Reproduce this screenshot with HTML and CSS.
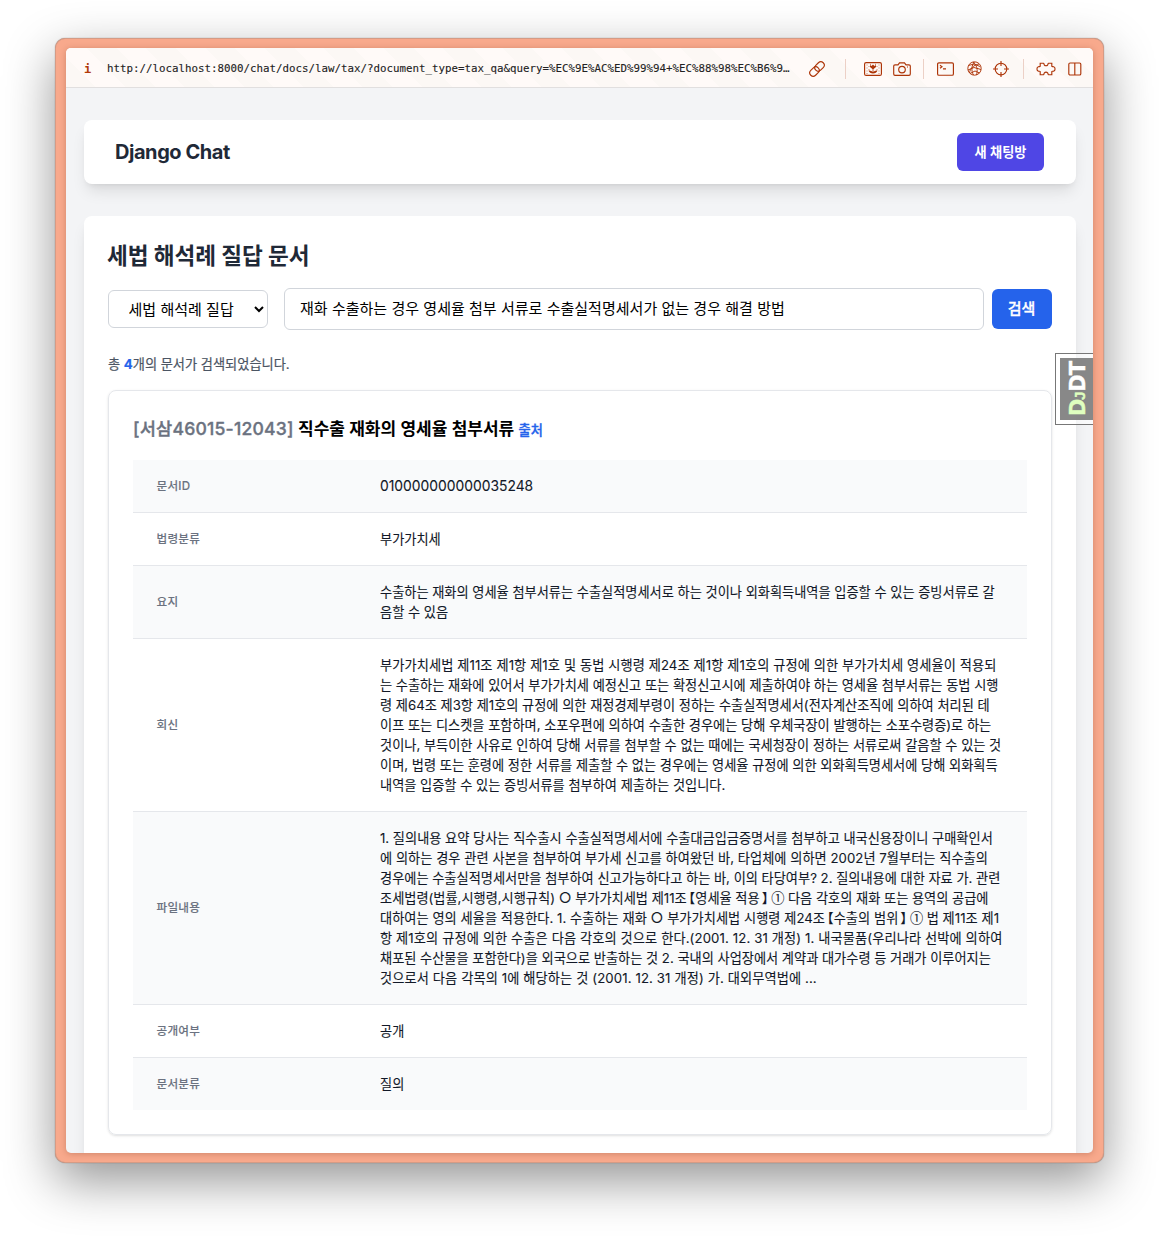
FILE: index.html
```html
<!DOCTYPE html>
<html lang="ko">
<head>
<meta charset="utf-8">
<title>세법 해석례 질답 문서</title>
<link rel="stylesheet" href="styles.css">
</head>
<body>
<div class="frame">
<div class="window">
  <header class="toolbar">
    <b class="info">i</b>
    <span class="url">http://localhost:8000/chat/docs/law/tax/?document_type=tax_qa&amp;query=%EC%9E%AC%ED%99%94+%EC%88%98%EC%B6%9…</span>
    <div class="tools">
      <svg class="link" width="16" height="16" viewBox="0 0 16 16"><g transform="rotate(-45 8 8)"><rect x="-.8" y="4.600" width="10.500" height="6.800" rx="3.400"/><rect x="6.300" y="4.600" width="10.500" height="6.800" rx="3.400"/></g></svg>
      <i class="sep s1"></i>
      <svg class="photo" width="18" height="14" viewBox="0 0 18 14"><rect x=".6" y=".6" width="16.8" height="12.8" rx="1.5"/><path class="dots" d="M2.500 3h1M2.500 6h1M2.500 9h1M2.500 11.500h1M14.500 3h1M14.500 6h1M14.500 9h1M14.500 11.500h1M4.500 4.500h1M4.500 7.500h1M12.500 4.500h1M12.500 7.500h1M6 2.300h1M11 2.300h1"/><path class="solid" d="M9 7.500 6 5V3l1.500 1L9 2.500 10.500 4 12 3v2zM8.600 7h.8v2.500h-.8zM4.500 8.500c2 0 3 .5 4.500 1.500 1.500-1 2.500-1.500 4.500-1.500-.5 2-2.500 3-4.500 3s-4-1-4.500-3z"/></svg>
      <svg class="camera" width="18" height="14" viewBox="0 0 18 14"><path d="M2 2.800h3L6.500.8h5L13 2.800h3a1.300 1.300 0 0 1 1.300 1.300v8A1.300 1.300 0 0 1 16 13.400H2a1.300 1.300 0 0 1-1.300-1.300v-8A1.300 1.300 0 0 1 2 2.800z"/><circle cx="9" cy="7.600" r="3.300"/><path d="M14 5h1"/></svg>
      <i class="sep s2"></i>
      <svg class="term" width="17" height="14" viewBox="0 0 17 14"><rect x=".6" y=".8" width="15.800" height="12.400" rx="1.300"/><path d="m3 3.300 2 1.500-2 1.500M6 6.800h3"/></svg>
      <svg class="globe" width="15" height="15" viewBox="0 0 15 15"><circle cx="7.500" cy="7.500" r="6.700"/><path d="M1.500 4.500 7 3l6 2.500M1 9l6-2.500 7 2M3 12.500 8 10l4.500 2M7.500 1C4.500 4 4 10 6.500 14M6 1c4 3 5 8 3.500 13M12 3C7 4 3 7 2.500 12"/></svg>
      <svg class="target" width="16" height="16" viewBox="0 0 16 16"><circle cx="8" cy="8" r="5.800"/><path d="M8 0v5M8 11v5M0 8h5M11 8h5"/></svg>
      <i class="sep s3"></i>
      <svg class="puzzle" width="20" height="14" viewBox="0 0 20 14"><path d="M4.200 1.200h3.300c.6 0 .3 1.200.9 1.900.8.900 2.400.9 3.200 0 .6-.7.3-1.900.9-1.900h3.300v3.100c0 .6 1 .2 1.900.5 1.800.7 1.800 3.600 0 4.300-.9.300-1.900-.1-1.900.5v3.100h-3.300c-.6 0-.3-1.200-.9-1.900-.8-.9-2.400-.9-3.200 0-.6.7-.3 1.900-.9 1.900H4.200V9.600c0-.6-1-.2-1.900-.5C.5 8.400.5 5.500 2.300 4.800c.9-.3 1.900.1 1.900-.5z"/></svg>
      <svg class="split" width="14" height="14" viewBox="0 0 14 14"><rect x=".8" y="1" width="12" height="12" rx="1.300"/><path d="M6.800 1v12"/></svg>
    </div>
  </header>
  <main class="page">
    <nav class="navbar"><span class="brand">Django Chat</span><a class="new-room">새 채팅방</a></nav>
    <section class="panel">
      <h1>세법 해석례 질답 문서</h1>
      <form class="search">
        <select><option>세법 해석례 질답</option></select>
        <input type="text" value="재화 수출하는 경우 영세율 첨부 서류로 수출실적명세서가 없는 경우 해결 방법">
        <button type="button">검색</button>
      </form>
      <p class="count">총 <b>4</b>개의 문서가 검색되었습니다.</p>
      <article class="doc">
        <h2><span class="code">[서삼46015-12043]</span> <span class="title">직수출 재화의 영세율 첨부서류</span> <a>출처</a></h2>
        <dl>
          <div class="row"><dt>문서ID</dt><dd class="number">010000000000035248</dd></div>
          <div class="row"><dt>법령분류</dt><dd>부가가치세</dd></div>
          <div class="row"><dt>요지</dt><dd>수출하는 재화의 영세율 첨부서류는 수출실적명세서로 하는 것이나 외화획득내역을 입증할 수 있는 증빙서류로 갈<br>음할 수 있음</dd></div>
          <div class="row"><dt>회신</dt><dd><span class="loose">부가가치세법 제11조 제1항 제1호 및 동법 시행령 제24조 제1항 제1호의 규정에 의한 부가가치세 영세율이 적용되</span><br>는 수출하는 재화에 있어서 부가가치세 예정신고 또는 확정신고시에 제출하여야 하는 영세율 첨부서류는 동법 시행<br>령 제64조 제3항 제1호의 규정에 의한 재정경제부령이 정하는 수출실적명세서(전자계산조직에 의하여 처리된 테<br>이프 또는 디스켓을 포함하며, 소포우편에 의하여 수출한 경우에는 당해 우체국장이 발행하는 소포수령증)로 하는<br>것이나, 부득이한 사유로 인하여 당해 서류를 첨부할 수 없는 때에는 국세청장이 정하는 서류로써 갈음할 수 있는 것<br>이며, 법령 또는 훈령에 정한 서류를 제출할 수 없는 경우에는 영세율 규정에 의한 외화획득명세서에 당해 외화획득<br>내역을 입증할 수 있는 증빙서류를 첨부하여 제출하는 것입니다.</dd></div>
          <div class="row"><dt>파일내용</dt><dd>1. 질의내용 요약 당사는 직수출시 수출실적명세서에 수출대금입금증명서를 첨부하고 내국신용장이니 구매확인서<br><span class="relaxed">에 의하는 경우 관련 사본을 첨부하여 부가세 신고를 하여왔던 바, 타업체에 의하면 2002년 7월부터는 직수출의</span><br>경우에는 수출실적명세서만을 첨부하여 신고가능하다고 하는 바, 이의 타당여부? 2. 질의내용에 대한 자료 가. 관련<br>조세법령(법률,시행령,시행규칙) <span class="ring">○</span> 부가가치세법 제11조<span class="bracket">【</span>영세율 적용<span class="bracket">】</span><span class="circled">①</span> 다음 각호의 재화 또는 용역의 공급에<br><span class="relaxed">대하여는 영의 세율을 적용한다. 1. 수출하는 재화 <span class="ring">○</span> 부가가치세법 시행령 제24조<span class="bracket">【</span>수출의 범위<span class="bracket">】</span><span class="circled">①</span> 법 제11조 제1</span><br><span class="looser">항 제1호의 규정에 의한 수출은 다음 각호의 것으로 한다.(2001. 12. 31 개정) 1. 내국물품(우리나라 선박에 의하여</span><br>채포된 수산물을 포함한다)을 외국으로 반출하는 것 2. 국내의 사업장에서 계약과 대가수령 등 거래가 이루어지는<br><span class="looser">것으로서 다음 각목의 1에 해당하는 것 (2001. 12. 31 개정) 가. 대외무역법에 ...</span></dd></div>
          <div class="row"><dt>공개여부</dt><dd>공개</dd></div>
          <div class="row"><dt>문서분류</dt><dd>질의</dd></div>
        </dl>
      </article>
    </section>
  </main>
  <aside class="djdt"><div><span>D<small>J</small></span>DT</div></aside>
</div>
</div>
</body>
</html>
```
FILE: styles.css
```css
* { box-sizing: border-box; margin: 0; }
body { width: 1159px; height: 1237px; padding: 38px 55px; background: #fff; overflow: hidden; font-family: Inter, "Noto Sans CJK KR", sans-serif; color: #111827; }
.frame { width: 1049px; height: 1125px; padding: 10px 11px; border-radius: 10px; background: #f8a98c; box-shadow: inset 0 0 0 1px rgba(150,130,120,.35), 0 0 1px rgba(0,0,0,.5), 0 18px 50px rgba(0,0,0,.42); }
.window { position: relative; height: 1105px; width: 1027px; border-radius: 5px; overflow: hidden; background: #f3f4f6; box-shadow: 0 1px 6px rgba(90,30,10,.25); }
.toolbar { height: 40px; border-bottom: 1px solid #e1dfdf; display: flex; align-items: center; background: repeating-linear-gradient(45deg, #fcf8f5 0 21px, #fffaf8 21px 42px); padding-top: 2px; }
.info { width: 41px; padding-left: 18px; color: #b23a0b; font: bold 12px "DejaVu Sans Mono", monospace; }
.url { width: 690px; font: 10.8px "DejaVu Sans Mono", monospace; color: #222; white-space: nowrap; -webkit-text-stroke: .1px #222; }
.tools { display: flex; align-items: center; flex: 1; }
.tools svg { fill: none; stroke: #ad3508; stroke-width: 1.15; flex: none; display: block; overflow: visible; }
.tools svg .solid { fill: #ad3508; stroke: none; }
.tools .dots { stroke: #d48a6c; }
.tools .globe { stroke-width: .95; }
.link { margin-left: 12px; }
.sep { width: 1px; height: 20px; background: #ecd0c6; flex: none; }
.s1 { margin-left: 20px; }
.photo { margin-left: 18px; }
.camera { margin-left: 11px; }
.s2 { margin-left: 12px; }
.term { margin-left: 13px; }
.globe { margin-left: 13px; }
.target { margin-left: 11px; }
.s3 { margin-left: 14px; }
.puzzle { margin-left: 12px; }
.split { margin-left: 12px; }
.page { padding: 32px 17px 0 18px; }
.navbar { height: 64px; background: #fff; border-radius: 8px; box-shadow: 0 10px 15px -3px rgba(0,0,0,.1), 0 4px 6px -4px rgba(0,0,0,.1); display: flex; justify-content: space-between; align-items: center; padding: 0 32px 0 31px; }
.brand { font-size: 20px; font-weight: 700; color: #1f2937; letter-spacing: -.45px; }
.new-room { width: 87px; height: 38px; border-radius: 6px; background: #4f46e5; color: #fff; font-size: 13.2px; font-weight: 600; display: grid; place-items: center; padding-bottom: 2px; }
.panel { margin-top: 32px; background: #fff; border-radius: 8px; height: 1100px; padding: 24px; box-shadow: 0 10px 15px -3px rgba(0,0,0,.1), 0 4px 6px -4px rgba(0,0,0,.1); }
h1 { font-size: 22.6px; line-height: 32px; color: #1f2937; font-weight: 700; white-space: nowrap; letter-spacing: -.05px; margin-left: -1px; }
.search { display: flex; align-items: center; margin-top: 16px; height: 42px; }
select, input, button { font: 15.04px Inter, "Noto Sans CJK KR", sans-serif; color: #000; }
select { width: 160px; height: 38px; border: 1px solid #d1d5db; border-radius: 6px; background: #fff; padding: 0 0 0 15.500px; margin-right: 16px; }
input { width: 700px; height: 42px; border: 1px solid #d1d5db; border-radius: 6px; padding: 0 15px 3px; margin-right: 8px; }
button { width: 60px; height: 40px; border: 0; border-radius: 6px; background: #2563eb; color: #fff; font-weight: 500; padding: 0 1px 3px 0; -webkit-text-stroke: .3px #fff; }
.count { margin-top: 24px; font-size: 13.2px; line-height: 20px; color: #4b5563; -webkit-text-stroke: .2px; }
.count b { color: #2563eb; }
.doc { margin-top: 16px; height: 745px; border: 1px solid #e5e7eb; border-radius: 8px; padding: 24px; box-shadow: 0 1px 3px rgba(0,0,0,.1), 0 1px 2px -1px rgba(0,0,0,.1); }
h2 { font-size: 17px; line-height: 28px; height: 28px; font-weight: 600; color: #000; white-space: nowrap; }
.code { color: #6b7280; font-weight: 500; font-size: 17.6px; letter-spacing: .2px; -webkit-text-stroke: .35px; }
h2 a { color: #2563eb; font-size: 13.2px; font-weight: 500; -webkit-text-stroke: .35px; }
dl { margin-top: 17px; }
.row { display: grid; grid-template-columns: 223.5px 1fr; align-items: center; }
.row + .row { border-top: 1px solid #e5e7eb; }
.row:nth-child(odd) { background: #f9fafb; }
dt { padding-left: 23.5px; font-size: 11.6px; font-weight: 500; color: #6b7280; letter-spacing: .25px; line-height: 16px; -webkit-text-stroke: .1px; }
dd { padding: 16px 0 16px 23.5px; font-size: 13.2px; line-height: 20px; white-space: nowrap; -webkit-text-stroke: .1px; }
.number { font-size: 13.85px; }
.relaxed { letter-spacing: .04px; }
.loose { letter-spacing: .1px; }
.looser { letter-spacing: .12px; }
.bracket { margin-left: 2px; font-family: "Noto Sans CJK KR", sans-serif; font-feature-settings: "halt"; line-height: 1; }
.circled { display: inline-block; width: 13px; margin-left: 3px; text-align: center; font: 13.2px/1 "Noto Sans CJK KR", sans-serif; }
.ring { font-size: 14px; line-height: 1; }
.djdt { position: absolute; right: -2px; top: 305px; width: 40px; height: 72px; border: 1px solid #777; padding: 4px; background: rgba(255,255,255,.5); }
.djdt div { height: 100%; width: 36px; background: rgba(115,115,115,.85); color: #fff; font: bold 21px/36px "DejaVu Sans", sans-serif; writing-mode: vertical-rl; text-orientation: sideways; transform: rotate(180deg); text-align: center; letter-spacing: -.8px; -webkit-text-stroke: .4px; }
.djdt span { color: #dfffbf; }
.djdt small { font: bold 15px/1 "Liberation Sans", sans-serif; margin-left: 1px; }
```
